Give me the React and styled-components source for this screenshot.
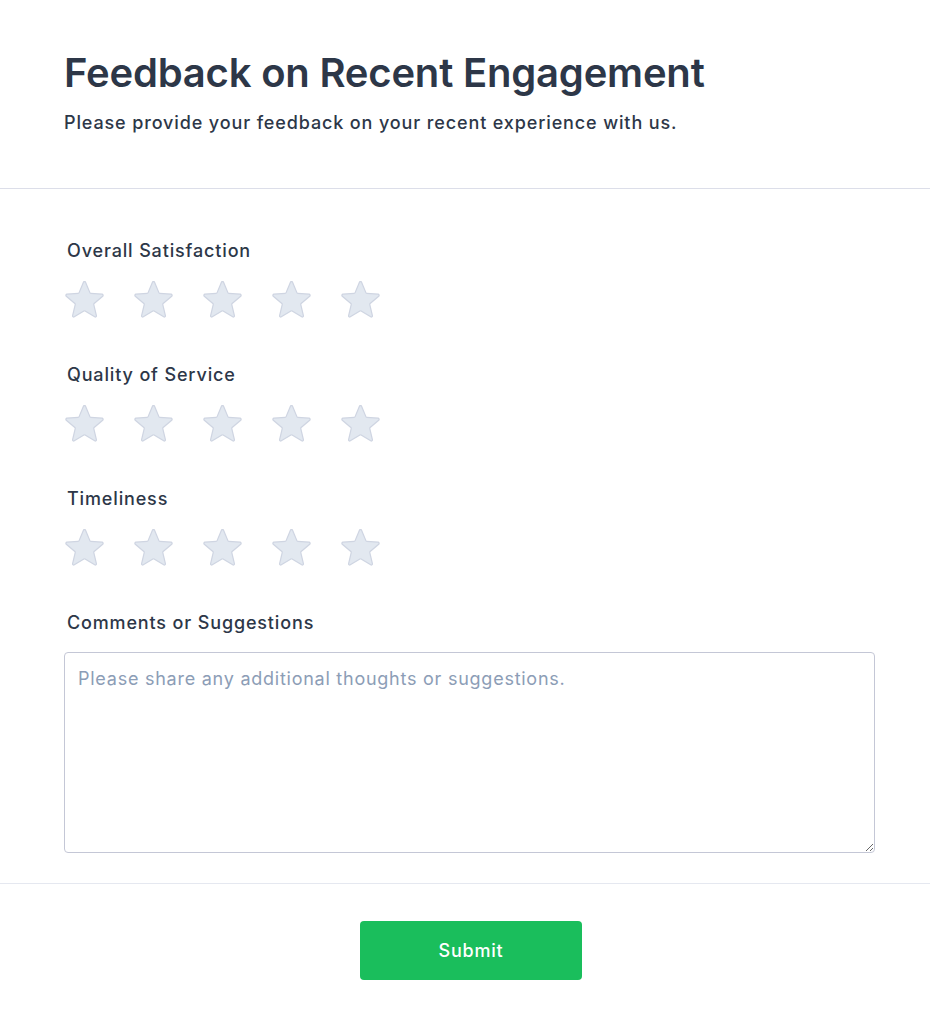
import React from "react";
import styled, { createGlobalStyle } from "styled-components";

const GlobalStyle = createGlobalStyle`
  * { box-sizing: border-box; }
  body {
    margin: 0;
    background: #ffffff;
    font-family: Inter, "Noto Sans", sans-serif;
    color: #2d3748;
  }
`;

const ratings = ["Overall Satisfaction", "Quality of Service", "Timeliness"];

const Star = () => (
  <StarIcon viewBox="2.4 2.9 19.2 18.2" aria-hidden="true">
    <path d="M11.48 3.499a.562.562 0 011.04 0l2.125 5.111a.563.563 0 00.475.345l5.518.442c.499.04.701.663.321.988l-4.204 3.602a.563.563 0 00-.182.557l1.285 5.385a.562.562 0 01-.84.61l-4.725-2.885a.562.562 0 00-.586 0L6.982 20.54a.562.562 0 01-.84-.61l1.285-5.386a.562.562 0 00-.182-.557l-4.204-3.602a.563.563 0 01.321-.988l5.518-.442a.563.563 0 00.475-.345L11.48 3.5z" />
  </StarIcon>
);

const App = () => {
  return (
    <>
      <GlobalStyle />
      <Page>
        <Header>
          <Title>Feedback on Recent Engagement</Title>
          <Subtitle>Please provide your feedback on your recent experience with us.</Subtitle>
        </Header>

        <Body>
          {ratings.map((label) => (
            <Field key={label}>
              <Label>{label}</Label>
              <Stars>
                {[1, 2, 3, 4, 5].map((n) => (
                  <StarButton key={n} type="button" aria-label={`${n} star`}>
                    <Star />
                  </StarButton>
                ))}
              </Stars>
            </Field>
          ))}

          <Field $last>
            <Label>Comments or Suggestions</Label>
            <Comments placeholder="Please share any additional thoughts or suggestions." />
          </Field>
        </Body>

        <Footer>
          <SubmitButton type="button">Submit</SubmitButton>
        </Footer>
      </Page>
    </>
  );
};

export default App;

const Page = styled.div`
  width: 930px;
  min-height: 1030px;
  background: #fff;
`;

const Header = styled.header`
  padding: 49px 64px 51px;
  border-bottom: 1px solid #dcdee9;
`;

const Title = styled.h1`
  margin: 0 0 12px;
  font-size: 40px;
  line-height: 48px;
  font-weight: 600;
  letter-spacing: -0.2px;
  color: #2d3748;
`;

const Subtitle = styled.p`
  margin: 0;
  font-size: 18px;
  line-height: 28px;
  font-weight: 500;
  letter-spacing: 0.87px;
  color: #2d3748;
`;

const Body = styled.div`
  padding: 48px 55px 30px 64px;
  border-bottom: 1px solid #e5e8f0;
  display: flex;
  flex-direction: column;
`;

const Field = styled.div`
  display: flex;
  flex-direction: column;
  margin-bottom: ${(p) => (p.$last ? "0" : "43px")};
`;

const Label = styled.label`
  font-size: 18px;
  line-height: 28px;
  font-weight: 500;
  letter-spacing: 0.85px;
  color: #2d3748;
  padding-left: 3px;
`;

const Stars = styled.div`
  display: flex;
  gap: 30px;
  margin-top: 16px;
  padding-left: 1px;
`;

const StarButton = styled.button`
  border: 0;
  padding: 0;
  background: none;
  display: flex;
  cursor: pointer;
`;

const StarIcon = styled.svg`
  width: 39px;
  height: 37px;
  fill: #e2e8f0;
  stroke: #cfd5e2;
  stroke-width: 0.6;
  stroke-linejoin: round;
`;

const Comments = styled.textarea`
  margin-top: 15px;
  width: 100%;
  height: 201px;
  padding: 12px 13px;
  border: 1px solid #c4c7d6;
  border-radius: 4px;
  font-family: Inter, "Noto Sans", sans-serif;
  font-size: 18px;
  line-height: 28px;
  letter-spacing: 0.75px;
  color: #2d3748;
  outline: none;
  resize: vertical;

  &::placeholder {
    color: #8c9db6;
  }
`;

const Footer = styled.div`
  display: flex;
  justify-content: center;
  padding: 37px 0 50px 12px;
`;

const SubmitButton = styled.button`
  width: 222px;
  height: 59px;
  border: 0;
  border-radius: 4px;
  background: #1abe5c;
  color: #fff;
  font-family: Inter, "Noto Sans", sans-serif;
  font-size: 18px;
  font-weight: 500;
  letter-spacing: 0.8px;
  cursor: pointer;
`;
